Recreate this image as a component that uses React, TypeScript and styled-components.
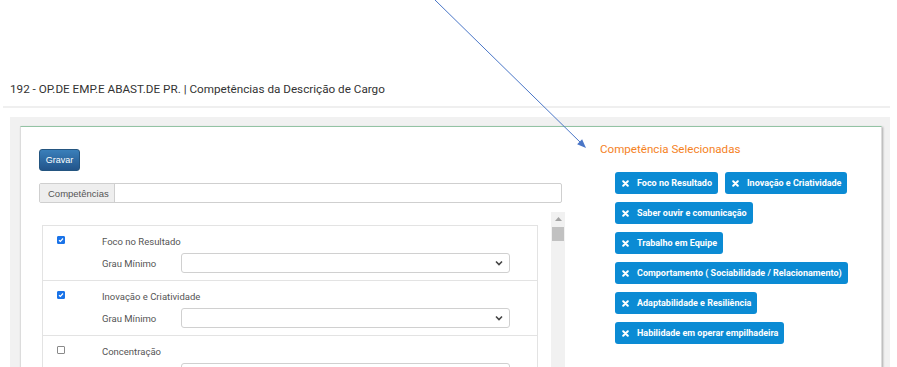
import React from 'react';
import styled, { createGlobalStyle } from 'styled-components';

const GlobalStyle = createGlobalStyle`
  html, body {
    margin: 0;
    padding: 0;
    background: #fff;
    overflow: hidden;
  }
  body {
    font-family: Roboto, "Liberation Sans", Arial, sans-serif;
  }
`;

const Page = styled.div`
  position: relative;
  width: 897px;
  height: 367px;
  overflow: hidden;
`;

const Heading = styled.div`
  padding: 80px 0 0 10px;
  font-size: 11.7px;
  line-height: 18px;
  color: #333;
`;

const Rule = styled.div`
  margin: 8px 7px 0 3px;
  height: 2px;
  background: #efefef;
`;

const Shell = styled.div`
  margin: 9px 7px 0 10px;
  padding: 9px 8px 0 10px;
  height: 300px;
  background: #f1f1f1;
`;

const Card = styled.div`
  display: grid;
  grid-template-columns: 526px 1fr;
  column-gap: 35px;
  height: 280px;
  padding: 14px 0 0 18px;
  background: #fff;
  border: 1px solid #dcdcdc;
  border-top-color: #93c3a4;
  box-shadow: 1px 1px 2px rgba(0, 0, 0, 0.3);
`;

const LeftCol = styled.div`
  display: flex;
  flex-direction: column;
  align-items: flex-start;
`;

const SaveButton = styled.button`
  width: 41px;
  height: 22px;
  margin-top: 8px;
  padding: 0;
  font-family: "Liberation Sans", Arial, sans-serif;
  font-size: 9px;
  color: #fff;
  background: linear-gradient(#3a7fba, #22548a);
  border: 1px solid #245580;
  border-radius: 3px;
`;

const InputGroup = styled.div`
  display: flex;
  width: 523px;
  height: 20px;
  margin-top: 12px;
  box-sizing: border-box;
  border: 1px solid #cfcfcf;
  border-radius: 2px;
`;

const Addon = styled.span`
  display: flex;
  align-items: center;
  width: 66px;
  padding-left: 8px;
  font-family: "Liberation Sans", Arial, sans-serif;
  font-size: 9.5px;
  color: #555;
  background: #eee;
  border-right: 1px solid #cfcfcf;
`;

const Field = styled.div`
  flex: 1;
`;

const ListArea = styled.div`
  display: flex;
  height: 170px;
  margin-top: 9px;
  overflow: hidden;
`;

const Panel = styled.div`
  width: 496px;
  margin: 13px 0 0 3px;
  box-sizing: border-box;
  border: 1px solid #e3e3e3;
  border-bottom: none;
`;

const Row = styled.div`
  display: grid;
  grid-template-columns: 45px 79px 329px;
  grid-template-rows: 12px 20px;
  row-gap: 6px;
  height: 55px;
  box-sizing: border-box;
  padding: 9px 0 0 14px;
  border-bottom: 1px solid #e3e3e3;
  font-size: 9.5px;
  color: #555;
`;

const Check = styled.span<{ $on: boolean }>`
  display: flex;
  align-items: center;
  justify-content: center;
  width: 8px;
  height: 8px;
  margin-top: 1px;
  border-radius: 1px;
  box-sizing: border-box;
  border: 1px solid ${(p) => (p.$on ? '#1a73e8' : '#8a8a8a')};
  background: ${(p) => (p.$on ? '#1a73e8' : '#fff')};
`;

const RowLabel = styled.span`
  grid-column: 2 / 4;
  align-self: center;
`;

const GradeLabel = styled.span`
  grid-column: 2;
  align-self: center;
`;

const SelectBox = styled.div`
  grid-column: 3;
  display: flex;
  align-items: center;
  justify-content: flex-end;
  padding-right: 6px;
  box-sizing: border-box;
  border: 1px solid #d0d0d0;
  border-radius: 3px;
`;

const Scroll = styled.div`
  display: flex;
  flex-direction: column;
  align-items: center;
  width: 14px;
  margin-left: 13px;
  background: #f1f1f1;
`;

const ScrollArrow = styled.div`
  display: flex;
  align-items: center;
  justify-content: center;
  height: 13px;
`;

const Thumb = styled.div`
  width: 12px;
  height: 14px;
  margin-top: 2px;
  background: #c1c1c1;
`;

const RightCol = styled.div`
  display: flex;
  flex-direction: column;
`;

const SideTitle = styled.div`
  font-size: 11.6px;
  line-height: 16px;
  color: #f5821f;
`;

const Tags = styled.div`
  display: flex;
  flex-wrap: wrap;
  align-content: flex-start;
  gap: 8px 7px;
  width: 242px;
  margin: 15px 0 0 15px;
`;

const Tag = styled.span`
  display: inline-flex;
  align-items: center;
  gap: 8px;
  height: 22px;
  padding: 0 6px 0 7px;
  box-sizing: border-box;
  font-size: 9px;
  font-weight: 700;
  color: #fff;
  background: #0b8bd4;
  border-radius: 3px;
`;

const Overlay = styled.svg`
  position: absolute;
  top: 0;
  left: 0;
  pointer-events: none;
`;

const rows = [
  { label: 'Foco no Resultado', on: true },
  { label: 'Inovação e Criatividade', on: true },
  { label: 'Concentração', on: false },
];

const chosen = [
  'Foco no Resultado',
  'Inovação e Criatividade',
  'Saber ouvir e comunicação',
  'Trabalho em Equipe',
  'Comportamento ( Sociabilidade / Relacionamento)',
  'Adaptabilidade e Resiliência',
  'Habilidade em operar empilhadeira',
];

function Times() {
  return (
    <svg width="7" height="7" viewBox="0 0 7 7">
      <path d="M1.2 1.2L5.8 5.8M5.8 1.2L1.2 5.8" stroke="#fff" strokeWidth="2" strokeLinecap="round" />
    </svg>
  );
}

export default function App() {
  return (
    <Page>
      <GlobalStyle />
      <Heading>192 - OP.DE EMP.E ABAST.DE PR. | Competências da Descrição de Cargo</Heading>
      <Rule />
      <Shell>
        <Card>
          <LeftCol>
            <SaveButton>Gravar</SaveButton>
            <InputGroup>
              <Addon>Competências</Addon>
              <Field />
            </InputGroup>
            <ListArea>
              <Panel>
                {rows.map((r) => (
                  <Row key={r.label}>
                    <Check $on={r.on}>
                      {r.on && (
                        <svg width="6" height="6" viewBox="0 0 6 6">
                          <path d="M1 3.2L2.4 4.5L5 1.5" stroke="#fff" strokeWidth="1.2" fill="none" />
                        </svg>
                      )}
                    </Check>
                    <RowLabel>{r.label}</RowLabel>
                    <GradeLabel>Grau Mínimo</GradeLabel>
                    <SelectBox>
                      <svg width="8" height="6" viewBox="0 0 8 6">
                        <path d="M1 1.5L4 4.5L7 1.5" stroke="#444" strokeWidth="1.6" fill="none" />
                      </svg>
                    </SelectBox>
                  </Row>
                ))}
              </Panel>
              <Scroll>
                <ScrollArrow>
                  <svg width="7" height="4" viewBox="0 0 7 4">
                    <path d="M0 4L3.5 0L7 4Z" fill="#a3a3a3" />
                  </svg>
                </ScrollArrow>
                <Thumb />
              </Scroll>
            </ListArea>
          </LeftCol>
          <RightCol>
            <SideTitle>Competência Selecionadas</SideTitle>
            <Tags>
              {chosen.map((c) => (
                <Tag key={c}>
                  <Times />
                  {c}
                </Tag>
              ))}
            </Tags>
          </RightCol>
        </Card>
      </Shell>
      <Overlay width="897" height="367">
        <line x1="435" y1="0" x2="581" y2="143" stroke="#4a76c7" strokeWidth="1" />
        <polygon points="586,148 577.1,144.2 582.1,139.2" fill="#4a76c7" />
      </Overlay>
    </Page>
  );
}
